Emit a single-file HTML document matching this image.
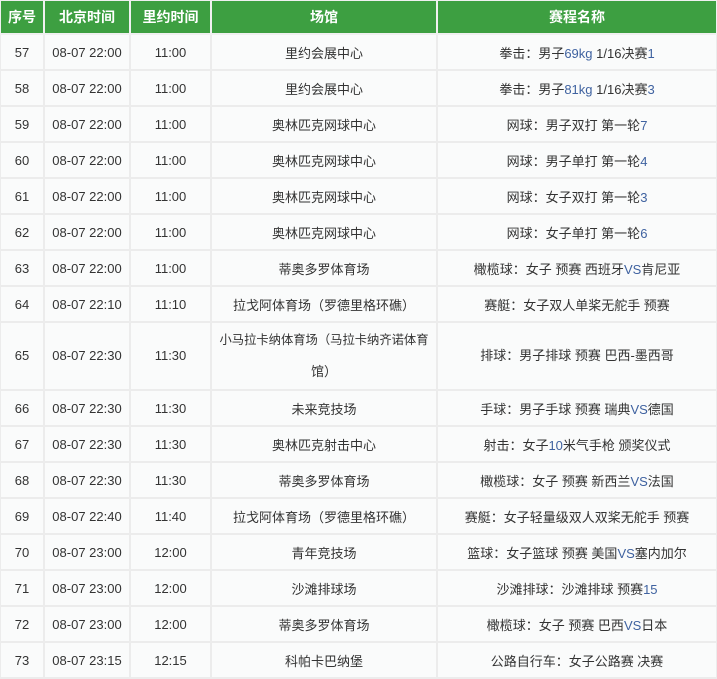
<!DOCTYPE html><html><head><meta charset="utf-8"><style>
body{margin:0;background:#fff;width:717px;height:677px;overflow:hidden}
table{border-collapse:collapse;table-layout:fixed;width:719px;margin:-1px 0 0 -1px;font:13px "Liberation Sans","Noto Sans CJK SC",sans-serif;color:#333}
td,th{border:2px solid #ececec;text-align:center;padding:0;height:34px;background:#fafbfb}
th{background:#3d9f41;color:#fff;font-weight:bold;font-size:14px;height:32px;border-color:#f0f0f0}
tr.d td{height:66px;line-height:32px;padding:0}
b{font-weight:normal;color:#3f62a0}
.n{white-space:nowrap;font-size:12.3px;line-height:32px;vertical-align:top}
</style></head><body><table>
<colgroup><col style="width:44px"><col style="width:86px"><col style="width:81px"><col style="width:226px"><col></colgroup>
<tr><th>序号</th><th>北京时间</th><th>里约时间</th><th>场馆</th><th>赛程名称</th></tr>
<tr><td>57</td><td>08-07 22:00</td><td>11:00</td><td>里约会展中心</td><td>拳击：男子<b>69kg</b> 1/16决赛<b>1</b></td></tr>
<tr><td>58</td><td>08-07 22:00</td><td>11:00</td><td>里约会展中心</td><td>拳击：男子<b>81kg</b> 1/16决赛<b>3</b></td></tr>
<tr><td>59</td><td>08-07 22:00</td><td>11:00</td><td>奥林匹克网球中心</td><td>网球：男子双打 第一轮<b>7</b></td></tr>
<tr><td>60</td><td>08-07 22:00</td><td>11:00</td><td>奥林匹克网球中心</td><td>网球：男子单打 第一轮<b>4</b></td></tr>
<tr><td>61</td><td>08-07 22:00</td><td>11:00</td><td>奥林匹克网球中心</td><td>网球：女子双打 第一轮<b>3</b></td></tr>
<tr><td>62</td><td>08-07 22:00</td><td>11:00</td><td>奥林匹克网球中心</td><td>网球：女子单打 第一轮<b>6</b></td></tr>
<tr><td>63</td><td>08-07 22:00</td><td>11:00</td><td>蒂奥多罗体育场</td><td>橄榄球：女子 预赛 西班牙<b>VS</b>肯尼亚</td></tr>
<tr><td>64</td><td>08-07 22:10</td><td>11:10</td><td>拉戈阿体育场（罗德里格环礁）</td><td>赛艇：女子双人单桨无舵手 预赛</td></tr>
<tr class="d"><td>65</td><td>08-07 22:30</td><td>11:30</td><td><span class="n">小马拉卡纳体育场（马拉卡纳齐诺体育</span><br>馆）</td><td>排球：男子排球 预赛 巴西-墨西哥</td></tr>
<tr><td>66</td><td>08-07 22:30</td><td>11:30</td><td>未来竞技场</td><td>手球：男子手球 预赛 瑞典<b>VS</b>德国</td></tr>
<tr><td>67</td><td>08-07 22:30</td><td>11:30</td><td>奥林匹克射击中心</td><td>射击：女子<b>10</b>米气手枪 颁奖仪式</td></tr>
<tr><td>68</td><td>08-07 22:30</td><td>11:30</td><td>蒂奥多罗体育场</td><td>橄榄球：女子 预赛 新西兰<b>VS</b>法国</td></tr>
<tr><td>69</td><td>08-07 22:40</td><td>11:40</td><td>拉戈阿体育场（罗德里格环礁）</td><td>赛艇：女子轻量级双人双桨无舵手 预赛</td></tr>
<tr><td>70</td><td>08-07 23:00</td><td>12:00</td><td>青年竞技场</td><td>篮球：女子篮球 预赛 美国<b>VS</b>塞内加尔</td></tr>
<tr><td>71</td><td>08-07 23:00</td><td>12:00</td><td>沙滩排球场</td><td>沙滩排球：沙滩排球 预赛<b>15</b></td></tr>
<tr><td>72</td><td>08-07 23:00</td><td>12:00</td><td>蒂奥多罗体育场</td><td>橄榄球：女子 预赛 巴西<b>VS</b>日本</td></tr>
<tr><td>73</td><td>08-07 23:15</td><td>12:15</td><td>科帕卡巴纳堡</td><td>公路自行车：女子公路赛 决赛</td></tr>
</table></body></html>
